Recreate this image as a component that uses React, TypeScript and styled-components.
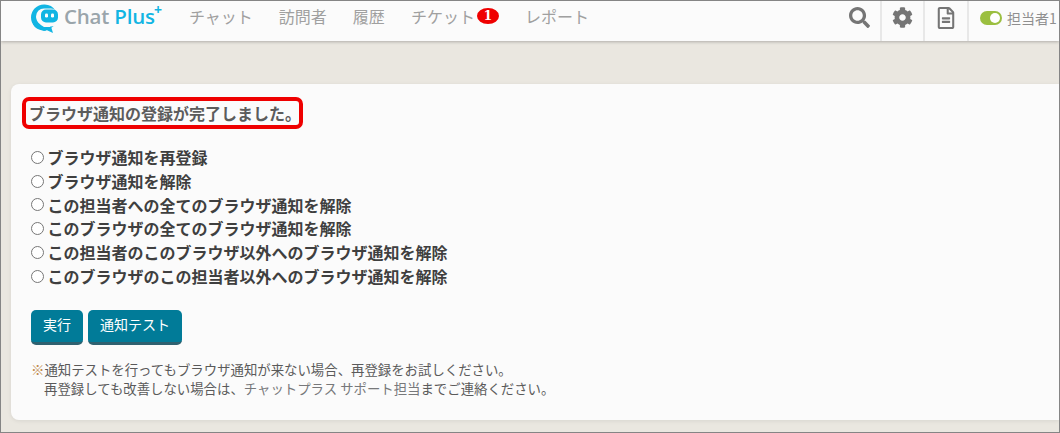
import React from 'react';
import styled, { createGlobalStyle } from 'styled-components';
import { FaCog, FaRegFileAlt, FaSearch } from 'react-icons/fa';

const FONT = '"Noto Sans CJK JP", "Noto Sans", sans-serif';

const GlobalStyle = createGlobalStyle`
    html, body {
        margin: 0;
        padding: 0;
        background: #eae7e0;
    }
`;

const navItems = [
    { label: 'チャット' },
    { label: '訪問者' },
    { label: '履歴' },
    { label: 'チケット', badge: 1 },
    { label: 'レポート' },
];

const options = [
    'ブラウザ通知を再登録',
    'ブラウザ通知を解除',
    'この担当者への全てのブラウザ通知を解除',
    'このブラウザの全てのブラウザ通知を解除',
    'この担当者のこのブラウザ以外へのブラウザ通知を解除',
    'このブラウザのこの担当者以外へのブラウザ通知を解除',
];

const Logo = () => (
    <LogoWrap>
        <svg width="28" height="29" viewBox="0 0 28 29">
            <path
                d="M13 0.5a13 13 0 1 0 0 26c1 0 2-.1 3-.3l6 2.8-1.6-5.2A13 13 0 0 0 24.5 6.5 13 13 0 0 0 13 .5z"
                fill="#12b5e3"
            />
            <rect x="5" y="4.5" width="23" height="18" rx="8" fill="#fbfbfb" />
            <path
                d="M15 5.5h7a5 5 0 0 1 5 5v3a5 5 0 0 1-5 5h-7a5 5 0 0 1-5-5v-3a5 5 0 0 1 5-5z"
                fill="#12b5e3"
            />
            <path d="M5 13a8 8 0 0 0 8 8l3 .5-1 5-2 .5-9-4-3-6z" fill="#12b5e3" />
            <path d="M7 13a7 7 0 0 0 7 7h6l-1 3h-6a10 10 0 0 1-6-10z" fill="#fbfbfb" />
            <rect x="14" y="9.5" width="3" height="4" rx="1.3" fill="#fff" />
            <rect x="20" y="9.5" width="3" height="4" rx="1.3" fill="#fff" />
        </svg>
        <LogoText>
            Chat <LogoAccent>Plus</LogoAccent>
            <LogoPlus>+</LogoPlus>
        </LogoText>
    </LogoWrap>
);

export default function App() {
    return (
        <Page>
            <GlobalStyle />
            <Header>
                <Logo />
                <Nav>
                    {navItems.map((item) => (
                        <NavItem key={item.label}>
                            {item.label}
                            {item.badge && <Badge>{item.badge}</Badge>}
                        </NavItem>
                    ))}
                </Nav>
                <Tools>
                    <SearchTool>
                        <FaSearch size={21} />
                    </SearchTool>
                    <Tool>
                        <FaCog size={21} />
                    </Tool>
                    <FileTool>
                        <FaRegFileAlt size={22} />
                    </FileTool>
                    <Operator>
                        <Toggle />
                        担当者1
                    </Operator>
                </Tools>
            </Header>
            <Card>
                <Message>ブラウザ通知の登録が完了しました。</Message>
                <OptionList>
                    {options.map((text) => (
                        <Option key={text}>
                            <Radio type="radio" name="action" />
                            {text}
                        </Option>
                    ))}
                </OptionList>
                <Buttons>
                    <Button>実行</Button>
                    <Button>通知テスト</Button>
                </Buttons>
                <Note>
                    <NoteMark>※</NoteMark>通知テストを行ってもブラウザ通知が来ない場合、再登録をお試しください。
                    <br />
                    <NoteIndent />
                    再登録しても改善しない場合は、<NoteLink>チャットプラス サポート担当</NoteLink>までご連絡ください。
                </Note>
            </Card>
        </Page>
    );
}

const Page = styled.div`
    box-sizing: border-box;
    width: 1060px;
    height: 433px;
    overflow: hidden;
    border: 1px solid #858585;
    background: #eae7e0;
    font-family: ${FONT};
`;

const Header = styled.header`
    display: flex;
    align-items: stretch;
    height: 40px;
    background: #fbfbfb;
    box-shadow: 0 1px 3px rgba(0, 0, 0, 0.25);
`;

const LogoWrap = styled.div`
    display: flex;
    align-items: center;
    gap: 5px;
    width: 188px;
    padding: 0 0 6px 30px;
    box-sizing: border-box;
`;

const LogoText = styled.span`
    position: relative;
    top: -2px;
    font-family: "Open Sans", sans-serif;
    font-size: 20.5px;
    line-height: 24px;
    font-weight: 600;
    letter-spacing: -0.2px;
    color: #9aa5ab;
    white-space: nowrap;
`;

const LogoAccent = styled.span`
    color: #12b5e3;
`;

const LogoPlus = styled.span`
    position: absolute;
    top: -1px;
    left: 90px;
    font-size: 14px;
    line-height: 14px;
    font-weight: 700;
    color: #12b5e3;
`;

const Nav = styled.nav`
    display: flex;
    align-items: center;
    gap: 26px;
    padding-bottom: 10px;
    flex: 1;
`;

const NavItem = styled.span`
    display: flex;
    align-items: center;
    font-size: 16px;
    color: #a0a0a0;
    white-space: nowrap;
`;

const Badge = styled.span`
    display: inline-flex;
    align-items: center;
    justify-content: center;
    width: 22px;
    height: 16px;
    margin-left: 2px;
    border-radius: 50%;
    background: #ef0000;
    color: #fff;
    font-family: "DejaVu Serif", serif;
    font-size: 12px;
    font-weight: 700;
`;

const Tools = styled.div`
    display: flex;
    align-items: stretch;
`;

const Tool = styled.div`
    display: flex;
    align-items: center;
    justify-content: center;
    box-sizing: border-box;
    width: 43px;
    padding-bottom: 7px;
    border-right: 2px solid #e8e8e8;
    color: #757575;
`;

const SearchTool = styled(Tool)`
    width: 44px;
`;

const FileTool = styled(Tool)`
    width: 44px;
`;

const Operator = styled.div`
    display: flex;
    align-items: center;
    gap: 5px;
    width: 90px;
    box-sizing: border-box;
    padding: 0 0 7px 11px;
    font-size: 14px;
    color: #8f8f8f;
    white-space: nowrap;
`;

const Toggle = styled.span`
    position: relative;
    display: inline-block;
    width: 22px;
    height: 14px;
    border-radius: 7px;
    background: #9bbf40;

    &::after {
        content: "";
        position: absolute;
        top: 2px;
        right: 2px;
        width: 10px;
        height: 10px;
        border-radius: 50%;
        background: #fff;
    }
`;

const Card = styled.main`
    box-sizing: border-box;
    height: 336px;
    margin: 43px 0 0 10px;
    padding: 13px 20px 0 11px;
    border-radius: 8px 0 0 8px;
    background: #fbfbfb;
    box-shadow: 0 1px 4px rgba(0, 0, 0, 0.08);
`;

const Message = styled.div`
    box-sizing: border-box;
    width: 281px;
    height: 32px;
    margin-bottom: 16px;
    padding-left: 3px;
    border: 4px solid #ef0000;
    border-radius: 7px;
    font-size: 16px;
    font-weight: 700;
    line-height: 24px;
    color: #5c5c5c;
    white-space: nowrap;
`;

const OptionList = styled.div`
    display: flex;
    flex-direction: column;
    margin-left: 9px;
`;

const Option = styled.label`
    display: flex;
    align-items: center;
    height: 23.8px;
    font-size: 16px;
    font-weight: 700;
    color: #3f3f3f;
    white-space: nowrap;
`;

const Radio = styled.input`
    width: 13px;
    height: 13px;
    margin: 1px 3.5px 0 0;
    accent-color: #767676;
`;

const Buttons = styled.div`
    display: flex;
    gap: 5px;
    margin: 22px 0 0 9px;
`;

const Button = styled.button`
    box-sizing: border-box;
    height: 35px;
    padding: 0 12px 4px;
    border: 0;
    border-bottom: 3px solid #2f6170;
    border-radius: 5px;
    background: #017b98;
    color: #fff;
    font-family: ${FONT};
    font-size: 14px;
    line-height: 26px;
`;

const Note = styled.p`
    margin: 15px 0 0 9px;
    font-size: 13.4px;
    line-height: 19px;
    color: #5a5a5a;
    white-space: nowrap;
`;

const NoteMark = styled.span`
    color: #c08a4a;
`;

const NoteIndent = styled.span`
    display: inline-block;
    width: 13px;
`;

const NoteLink = styled.span`
    color: #77787a;
`;
